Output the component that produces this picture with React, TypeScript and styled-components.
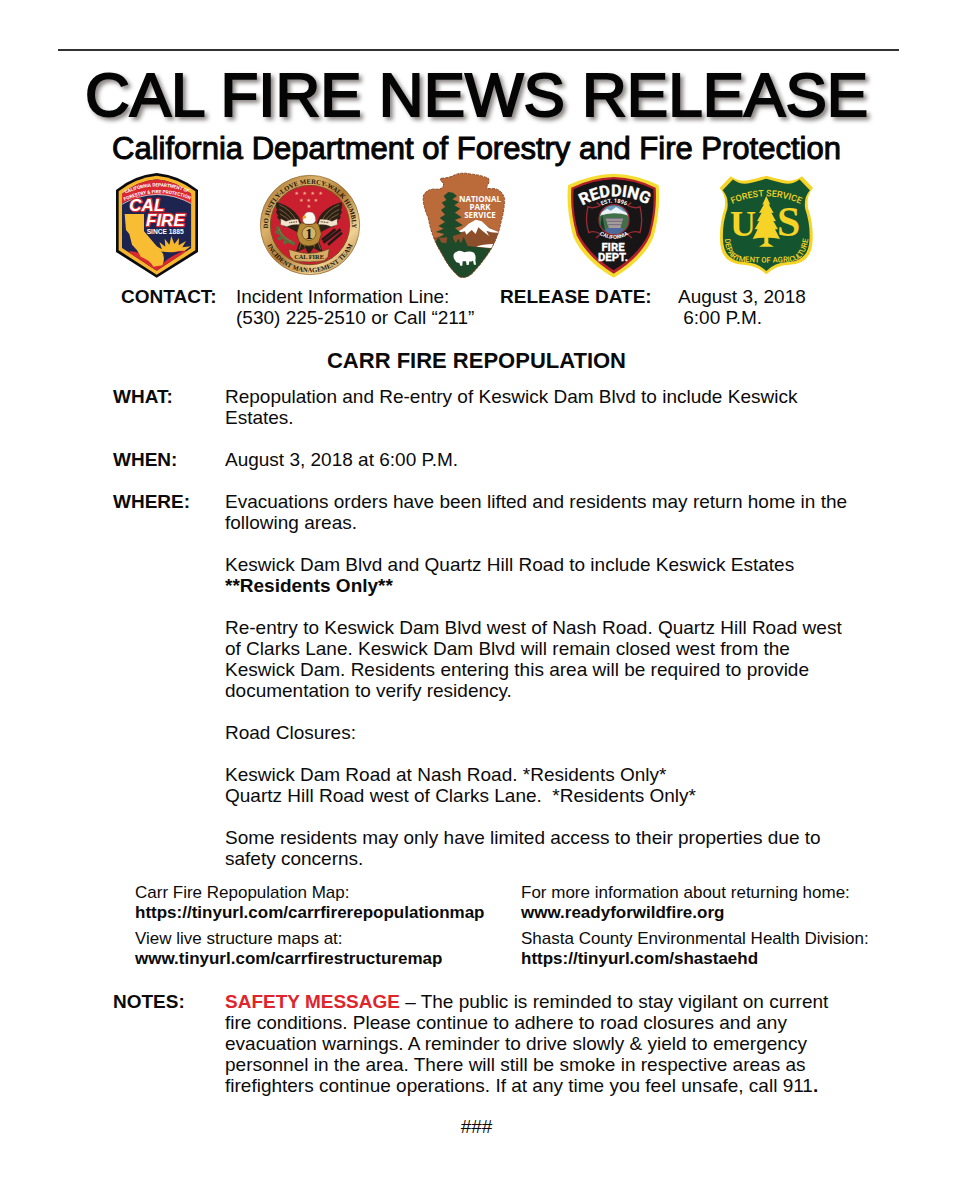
import React from "react";
import styled, { createGlobalStyle } from "styled-components";

const GlobalStyle = createGlobalStyle`
  body {
    margin: 0;
    background: #fff;
    color: #0b0b0b;
    font-family: "Liberation Sans", Arial, sans-serif;
    font-size: 19px;
    line-height: 21px;
  }
`;

const Page = styled.main`
  padding: 49px 58px 64px;
`;

const Rule = styled.hr`
  margin: 0 -4px 0 0;
  border: 0;
  height: 2px;
  background: #333132;
`;

const Masthead = styled.header`
  text-align: center;
  white-space: nowrap;
`;

const Title = styled.h1`
  margin: 8px 0 0;
  font-size: 62px;
  line-height: 72px;
  font-weight: 400;
  color: #050505;
  -webkit-text-stroke: 2px #050505;
  filter: drop-shadow(3px 3px 2px rgba(60, 50, 50, 0.6));
`;

const Subtitle = styled.p`
  margin: 0;
  font-size: 31px;
  line-height: 36px;
  color: #050505;
  -webkit-text-stroke: 1px #050505;
`;

const LogoRow = styled.div`
  display: flex;
  justify-content: space-between;
  margin: 1px 76px 3px 52px;

  svg {
    display: block;
    height: 115px;
    flex: none;
  }
`;

const ContactGrid = styled.dl`
  display: grid;
  grid-template-columns: 115px 264px 178px 1fr;
  margin: 0 0 21px 63px;

  dt {
    font-weight: 700;
  }

  dd {
    margin: 0;
    white-space: pre-line;
  }
`;

const Headline = styled.h2`
  margin: 0 0 13px;
  font-size: 22px;
  line-height: 24px;
  text-align: center;
`;

const Details = styled.section`
  display: grid;
  row-gap: 21px;
  margin: 0 42px 0 55px;
`;

const Row = styled.div`
  display: grid;
  grid-template-columns: 112px 1fr;
`;

const Label = styled.h3`
  margin: 0;
  font-size: 19px;
  line-height: 21px;
`;

const Copy = styled.div`
  display: grid;
  row-gap: 21px;

  p {
    margin: 0;
  }
`;

const Alert = styled.strong`
  color: #e0242b;
`;

const LinkGrid = styled.section`
  display: grid;
  grid-template-columns: 386px 1fr;
  row-gap: 6px;
  margin: 14px 0 22px 77px;
  font-size: 17px;
  line-height: 20px;
  white-space: nowrap;

  p {
    margin: 0;
  }

  a {
    color: inherit;
    font-weight: 700;
    text-decoration: none;
  }
`;

const EndMark = styled.p`
  margin: 20px 0 0;
  text-align: center;
`;

const sans = "Liberation Sans, Arial, sans-serif";
const serif = "Liberation Serif, serif";

const CalFireLogo = () => (
  <svg width="95" viewBox="0 0 285 345" role="img" aria-label="CAL FIRE">
    <defs>
      <path id="cf1" d="M34 83Q140 29 248 80" />
      <path id="cf2" d="M30 105Q140 48 254 101" />
      <clipPath id="cfClip">
        <path d="M140 34Q195 38 244 78L244 240L140 308L36 240L36 78Q85 38 140 34Z" />
      </clipPath>
    </defs>
    <path d="M140 15Q210 22 264 66L264 252L140 329L18 252L18 66Q70 22 140 15Z" fill="#0b0b12" />
    <path d="M140 23Q205 30 256 70L256 247L140 320L26 247L26 70Q75 30 140 23Z" fill="#f6b72c" />
    <g clipPath="url(#cfClip)">
      <rect width="285" height="345" fill="#1d2450" />
      <path d="M20 115V10H260V115Q140 46 20 115Z" fill="#d9282e" />
      <path d="M30 112Q140 48 250 110" fill="none" stroke="#fff" strokeWidth="2" />
      <path d="M142 250L138 234L156 244L148 222L166 236L164 212L178 230L184 204L193 228L207 210L206 232L228 219L217 238L242 235L224 248L244 258Z" fill="#f6b72c" />
      <path d="M30 262Q60 240 92 258L160 268Q200 240 250 252L250 290L140 320L30 280Z" fill="#d9282e" />
      <path d="M112 262Q180 254 220 250Q174 266 156 290Z" fill="#1d2450" />
    </g>
    <path d="M44 138H102V190L158 256Q166 272 157 292L130 296Q120 276 92 266Q84 246 66 230L58 198L48 186Z" fill="#f9bd34" />
    <g fill="#fff" fontFamily={sans} fontWeight="700">
      <g fontFamily="Roboto, sans-serif" fontSize="14" textAnchor="middle">
        <text><textPath href="#cf1" startOffset="50%">CALIFORNIA DEPARTMENT OF</textPath></text>
        <text><textPath href="#cf2" startOffset="50%">FORESTRY &amp; FIRE PROTECTION</textPath></text>
      </g>
      <g fontStyle="italic" fontSize="51" stroke="#d9282e" strokeWidth="7" paintOrder="stroke" strokeLinejoin="round">
        <text x="58" y="130">CAL</text>
        <text x="108" y="174">FIRE</text>
      </g>
      <text x="110" y="198" fontSize="20">SINCE 1885</text>
    </g>
  </svg>
);

const wing = "M150 172L140 146Q120 116 74 102Q68 116 76 126Q68 132 78 142Q72 150 84 156Q80 166 94 168Q92 178 108 178Q126 188 150 200Z";

const TeamSeal = () => (
  <svg width="115" viewBox="0 0 345 345" role="img" aria-label="Incident Management Team">
    <defs>
      <linearGradient id="gold" x1="0" y1="0" x2="1" y2="1">
        <stop offset="0" stopColor="#9a6c2c" />
        <stop offset="0.3" stopColor="#dcb26a" />
        <stop offset="0.5" stopColor="#b07c35" />
        <stop offset="0.75" stopColor="#f0d295" />
        <stop offset="1" stopColor="#a06f2a" />
      </linearGradient>
      <path id="sealTop" d="M60 227A126 126 0 1 1 288 227" />
      <path id="sealBottom" d="M38 212A142 142 0 0 0 310 212" />
    </defs>
    <circle cx="174" cy="171" r="149" fill="url(#gold)" stroke="#8a6127" strokeWidth="2" />
    <circle cx="174" cy="171" r="119" fill="#c91f2f" stroke="#7c5120" strokeWidth="3" />
    <g fill="#1c1308" fontFamily={serif} fontWeight="700" fontSize="20">
      <text><textPath href="#sealTop" startOffset="50%" textAnchor="middle">DO JUSTLY-LOVE MERCY-WALK HUMBLY</textPath></text>
      <text><textPath href="#sealBottom" startOffset="50%" textAnchor="middle">INCIDENT MANAGEMENT TEAM</textPath></text>
    </g>
    <g fill="#f3b58a" fontFamily="DejaVu Sans, sans-serif" fontSize="16" textAnchor="middle">
      <text x="134" y="82">★</text><text x="158" y="82">★</text><text x="182" y="82">★</text><text x="206" y="82">★</text>
      <text x="148" y="101">★</text><text x="170" y="101">★</text><text x="192" y="101">★</text>
      <text x="171" y="119">★</text>
    </g>
    <g fill="#2a2015">
      <path d={wing} />
      <path d={wing} transform="translate(342 0) scale(-1 1)" />
      <path d="M150 200L130 256L160 240L171 262L184 240L214 256L194 200Z" />
    </g>
    <g fill="none" stroke="#a3804c" strokeWidth="2">
      <path d="M82 110Q116 124 134 160M82 124Q108 136 126 164M84 138Q104 146 120 166M262 110Q226 124 208 160M262 124Q234 136 216 164M260 138Q238 146 222 166" />
      <path d="M148 222L142 244M198 222L206 244M160 226L158 238M184 226L188 238" />
    </g>
    <path d="M78 180Q84 210 124 226M84 194L74 192M92 206L82 212M104 216L98 224" fill="none" stroke="#5d6b3a" strokeWidth="11" strokeLinecap="round" />
    <path d="M82 184Q90 208 122 222" fill="none" stroke="#a9a86a" strokeWidth="2" strokeDasharray="4 4" />
    <path d="M266 184L214 224M270 194L228 230M250 184L210 216" fill="none" stroke="#241a18" strokeWidth="8" />
    <path d="M86 152L102 160Q120 152 138 154L144 170Q120 168 104 176L86 170ZM256 152L240 160Q224 152 204 154L198 170Q222 168 238 176L256 170Z" fill="#f2e3cc" stroke="#5e4324" strokeWidth="1" />
    <path d="M112 164L136 161M206 161L230 164" stroke="#6b4d2c" strokeWidth="4" strokeDasharray="3 2" />
    <path d="M152 158Q156 130 172 132Q190 130 191 158L184 168H158Z" fill="#fbf8f2" stroke="#77736b" />
    <path d="M160 142Q150 143 151 153L163 149Z" fill="#e6a724" />
    <path d="M150 164Q170 176 192 164L200 170L208 198L200 222Q188 234 170 234Q152 234 142 222L134 198L142 170Z" fill="#b68b38" stroke="#56401b" strokeWidth="2" />
    <circle cx="171" cy="196" r="21" fill="#d5b369" stroke="#5e4319" strokeWidth="2" />
    <text x="171" y="212" textAnchor="middle" fontFamily={serif} fontWeight="700" fontSize="45" fill="#141008">1</text>
    <path d="M110 244L124 248Q170 264 216 248L232 242L228 266L216 278Q170 286 126 278L114 264Z" fill="#d9ad67" stroke="#5e4319" strokeWidth="2" />
    <text x="171" y="274" textAnchor="middle" fontFamily={serif} fontWeight="700" fontSize="19" fill="#241708">CAL FIRE</text>
  </svg>
);

const arrowhead =
  "M78 31Q104 30 118 21Q140 12 166 18Q194 20 220 31Q226 40 216 54Q212 63 226 62Q258 58 269 92Q268 128 258 162Q250 204 228 244Q203 284 170 318Q150 334 132 326Q102 300 82 260Q50 210 40 150Q22 110 25 84Q32 64 60 63Q78 66 84 56Q90 46 76 37Z";

const ParkServiceLogo = () => (
  <svg width="100" viewBox="0 0 300 345" role="img" aria-label="National Park Service">
    <defs>
      <clipPath id="arrowhead">
        <path d={arrowhead} />
      </clipPath>
    </defs>
    <g clipPath="url(#arrowhead)">
      <rect width="300" height="345" fill="#bb6a39" />
      <path d="M40 214L120 194L188 160L258 196V245H40Z" fill="#8d4f2b" />
      <path d="M116 197Q146 184 160 168L182 155L200 160L222 180L256 194Q230 196 214 188L222 204L202 188L190 178L182 198L170 186L154 200L150 190Z" fill="#fff" />
      <path d="M184 236Q208 226 256 229L250 242Q220 239 184 236Z" fill="#fff" />
      <path d="M30 222L60 226L70 208L80 224L100 226L112 206L122 226L130 212L138 226L146 206L158 234L230 242L270 240V345H30Z" fill="#1e4a2a" />
      <path d="M92 240L97 208L70 210L88 198L62 192L86 182L70 174L90 162L74 150L90 140L78 126L91 116L80 104L94 96L86 84L100 72L114 74L126 84L112 94L132 102L118 112L136 122L120 134L140 148L120 156L144 172L120 180L140 196L114 204L114 240Z" fill="#1e4a2a" />
      <path d="M117 272Q112 256 124 252Q134 244 148 253Q164 247 177 254Q184 264 181 276L183 290H177L174 278Q166 282 163 280L161 291H155L153 280L143 280L142 293H136L133 285L124 283Z" fill="#fff" />
    </g>
    <path d={arrowhead} fill="none" stroke="#8a4a28" strokeWidth="3" strokeDasharray="9 3" />
    <g fill="#fff" fontFamily="Open Sans, sans-serif" fontWeight="700" fontSize="24" textAnchor="middle">
      <text x="195" y="102">NATIONAL</text>
      <text x="195" y="126">PARK</text>
      <text x="195" y="150">SERVICE</text>
    </g>
  </svg>
);

const ReddingLogo = () => (
  <svg width="105" viewBox="0 0 315 345" role="img" aria-label="Redding Fire Department">
    <defs>
      <path id="rdTop" d="M46 122Q157 50 272 118" />
      <path id="rdEst" d="M106 120Q156 88 206 120" />
      <path id="rdCal" d="M100 190Q156 236 212 190" />
      <clipPath id="scene"><circle cx="156" cy="155" r="43" /></clipPath>
    </defs>
    <path d="M155 17Q230 20 290 52Q296 128 275 206Q244 278 155 329Q66 278 34 206Q12 128 18 52Q82 20 155 17Z" fill="#f4dd2f" />
    <path d="M155 27Q225 30 281 59Q286 128 265 202Q236 268 155 317Q76 268 44 202Q23 128 28 59Q87 30 155 27Z" fill="#b3202c" />
    <path d="M155 34Q220 36 274 64Q279 128 259 198Q230 260 155 307Q82 260 50 198Q30 128 35 64Q92 36 155 34Z" fill="#181517" />
    <g fill="none" stroke="#9c2a32" strokeWidth="4">
      <path d="M116 112Q110 108 104 104M196 112L208 104M116 112Q92 124 78 116Q68 156 80 194Q96 186 116 198L102 210M196 112Q220 124 234 116Q244 156 234 194Q216 186 196 198L210 210" />
      <circle cx="156" cy="155" r="45" />
    </g>
    <g clipPath="url(#scene)">
      <rect x="110" y="105" width="94" height="96" fill="#6c9ec0" />
      <path d="M110 138L136 122L146 128L162 117L184 130L204 138V150H110Z" fill="#eef3f7" />
      <path d="M110 144Q156 128 204 144V205H110Z" fill="#3f7048" />
      <path d="M130 150H184L174 184H142Z" fill="#a79c9c" />
      <path d="M128 152H186M132 160H182M138 170H178" stroke="#565068" strokeWidth="2" />
      <path d="M136 180H180L204 205H110Z" fill="#4e6a9d" />
      <path d="M112 196L120 138L130 192Z" fill="#173b26" />
    </g>
    <g fill="#fff" fontFamily="Roboto, sans-serif" fontWeight="700" textAnchor="middle">
      <text fontSize="49" stroke="#fff" strokeWidth="1"><textPath href="#rdTop" startOffset="50%">REDDING</textPath></text>
      <text fontSize="17"><textPath href="#rdEst" startOffset="50%">EST. 1896</textPath></text>
      <text fontSize="16"><textPath href="#rdCal" startOffset="50%">CALIFORNIA</textPath></text>
      <g fontSize="34" stroke="#fff" strokeWidth="1">
        <text x="153" y="250">FIRE</text>
        <text x="153" y="278">DEPT.</text>
      </g>
    </g>
  </svg>
);

const shield =
  "M50 25Q76 44 106 36Q134 30 157 23Q180 30 208 36Q238 44 264 25L297 60Q276 84 282 120Q298 166 296 216Q294 288 226 290Q184 292 157 319Q130 292 88 290Q20 288 18 216Q16 166 32 120Q38 84 17 60Z";

const ForestServiceLogo = () => (
  <svg width="105" viewBox="0 0 315 345" role="img" aria-label="U.S. Forest Service">
    <defs>
      <path id="fsTop" d="M46 112Q157 58 268 112" />
      <path id="fsBottom" d="M32 205C34 264 56 284 104 282Q157 286 210 282C258 284 276 264 284 205" />
    </defs>
    <path d={shield} fill="#f5d327" />
    <path d={shield} fill="#14552f" transform="translate(10 11) scale(.935)" />
    <g fill="#f5d327">
      <path d="M157 84L169 110L164 109L179 135L172 134L186 160L178 159L192 184L183 184L198 213Q180 209 163 209V226L180 236H135L151 226V209Q134 209 116 213L131 184L122 184L136 159L129 160L143 134L135 135L150 109L145 110Z" />
      <g fontFamily="Roboto, sans-serif" fontWeight="500" textAnchor="middle">
        <text fontSize="27"><textPath href="#fsTop" startOffset="50%">FOREST SERVICE</textPath></text>
        <text fontSize="23"><textPath href="#fsBottom" startOffset="50%">DEPARTMENT OF AGRICULTURE</textPath></text>
      </g>
      <g fontFamily={serif} fontWeight="700" textAnchor="middle">
        <text x="87" y="205" fontSize="108">U</text>
        <text x="224" y="205" fontSize="126">S</text>
      </g>
    </g>
  </svg>
);

const resources = [
  { text: "Carr Fire Repopulation Map:", url: "https://tinyurl.com/carrfirerepopulationmap" },
  { text: "For more information about returning home:", url: "www.readyforwildfire.org" },
  { text: "View live structure maps at:", url: "www.tinyurl.com/carrfirestructuremap" },
  { text: "Shasta County Environmental Health Division:", url: "https://tinyurl.com/shastaehd" },
];

const toHref = (url: string) => (url.startsWith("http") ? url : `https://${url}`);

export default function App() {
  return (
    <>
      <GlobalStyle />
      <Page>
        <Rule />
        <Masthead>
          <Title>CAL FIRE NEWS RELEASE</Title>
          <Subtitle>California Department of Forestry and Fire Protection</Subtitle>
        </Masthead>
        <LogoRow>
          <CalFireLogo />
          <TeamSeal />
          <ParkServiceLogo />
          <ReddingLogo />
          <ForestServiceLogo />
        </LogoRow>
        <ContactGrid>
          <dt>CONTACT:</dt>
          <dd>{"Incident Information Line:\n(530) 225-2510 or Call “211”"}</dd>
          <dt>RELEASE DATE:</dt>
          <dd>{"August 3, 2018\n\u00a06:00 P.M."}</dd>
        </ContactGrid>
        <Headline>CARR FIRE REPOPULATION</Headline>
        <Details>
          <Row>
            <Label>WHAT:</Label>
            <Copy>
              <p>Repopulation and Re-entry of Keswick Dam Blvd to include Keswick Estates.</p>
            </Copy>
          </Row>
          <Row>
            <Label>WHEN:</Label>
            <Copy>
              <p>August 3, 2018 at 6:00 P.M.</p>
            </Copy>
          </Row>
          <Row>
            <Label>WHERE:</Label>
            <Copy>
              <p>Evacuations orders have been lifted and residents may return home in the following areas.</p>
              <p>
                Keswick Dam Blvd and Quartz Hill Road to include Keswick Estates
                <br />
                <strong>**Residents Only**</strong>
              </p>
              <p>
                Re-entry to Keswick Dam Blvd west of Nash Road. Quartz Hill Road west of Clarks Lane. Keswick Dam Blvd
                will remain closed west from the Keswick Dam. Residents entering this area will be required to provide
                documentation to verify residency.
              </p>
              <p>Road Closures:</p>
              <p>
                Keswick Dam Road at Nash Road. *Residents Only*
                <br />
                Quartz Hill Road west of Clarks Lane.&nbsp; *Residents Only*
              </p>
              <p>Some residents may only have limited access to their properties due to safety concerns.</p>
            </Copy>
          </Row>
        </Details>
        <LinkGrid>
          {resources.map(({ text, url }) => (
            <p key={url}>
              {text}
              <br />
              <a href={toHref(url)}>{url}</a>
            </p>
          ))}
        </LinkGrid>
        <Details>
          <Row>
            <Label>NOTES:</Label>
            <Copy>
              <p>
                <Alert>SAFETY MESSAGE</Alert> – The public is reminded to stay vigilant on current fire conditions.
                Please continue to adhere to road closures and any evacuation warnings. A reminder to drive slowly &amp;
                yield to emergency personnel in the area. There will still be smoke in respective areas as firefighters
                continue operations. If at any time you feel unsafe, call 911<strong>.</strong>
              </p>
            </Copy>
          </Row>
        </Details>
        <EndMark>###</EndMark>
      </Page>
    </>
  );
}
